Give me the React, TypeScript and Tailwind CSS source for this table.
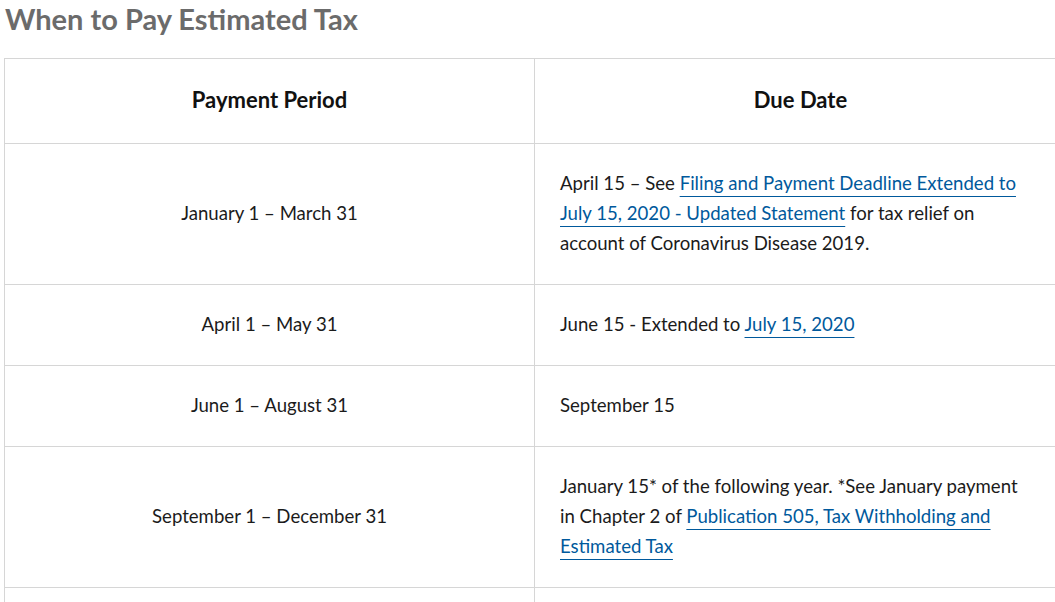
import React from "react";

const linkCls =
  "text-[#00599c] underline decoration-[#00599c] decoration-1 underline-offset-[6px]";

const cellL = "border border-[#d6d6d6] text-center pt-[24px] pb-[26px] px-[25px]";
const cellR = "border border-[#d6d6d6] pt-[24px] pb-[26px] px-[25px]";

export default function App() {
  return (
    <div
      className="w-[1055px] h-[602px] overflow-hidden bg-white text-[#1b1b1b]"
      style={{ fontFamily: "Lato, 'Open Sans', sans-serif" }}
    >
      <h2 className="pl-[5px] pt-[3px] text-[29px] leading-[32px] font-bold text-[#6b6b6b]">
        When to Pay Estimated Tax
      </h2>
      <table className="mt-[23px] ml-[4px] w-[1062px] border-collapse table-fixed text-[18.6px] leading-[30px]">
        <thead>
          <tr className="h-[85px]">
            <th className="w-[530px] border border-[#d6d6d6] text-center text-[22px] font-bold text-[#111] pb-[2px]">
              Payment Period
            </th>
            <th className="w-[532px] border border-[#d6d6d6] text-center text-[22px] font-bold text-[#111] pb-[2px]">
              Due Date
            </th>
          </tr>
        </thead>
        <tbody>
          <tr>
            <td className={cellL}>January 1 – March 31</td>
            <td className={cellR}>
              April 15 – See{" "}
              <a className={linkCls}>
                Filing and Payment Deadline Extended to
                <br />
                July 15, 2020 - Updated Statement
              </a>{" "}
              for tax relief on
              <br />
              account of Coronavirus Disease 2019.
            </td>
          </tr>
          <tr>
            <td className={cellL}>April 1 – May 31</td>
            <td className={cellR}>
              June 15 - Extended to <a className={linkCls}>July 15, 2020</a>
            </td>
          </tr>
          <tr>
            <td className={cellL}>June 1 – August 31</td>
            <td className={cellR}>September 15</td>
          </tr>
          <tr>
            <td className={cellL}>September 1 – December 31</td>
            <td className={cellR}>
              January 15* of the following year. *See January payment
              <br />
              in Chapter 2 of{" "}
              <a className={linkCls}>
                Publication 505, Tax Withholding and
                <br />
                Estimated Tax
              </a>
            </td>
          </tr>
          <tr>
            <td className={cellL}>&nbsp;</td>
            <td className={cellR}>&nbsp;</td>
          </tr>
        </tbody>
      </table>
    </div>
  );
}
